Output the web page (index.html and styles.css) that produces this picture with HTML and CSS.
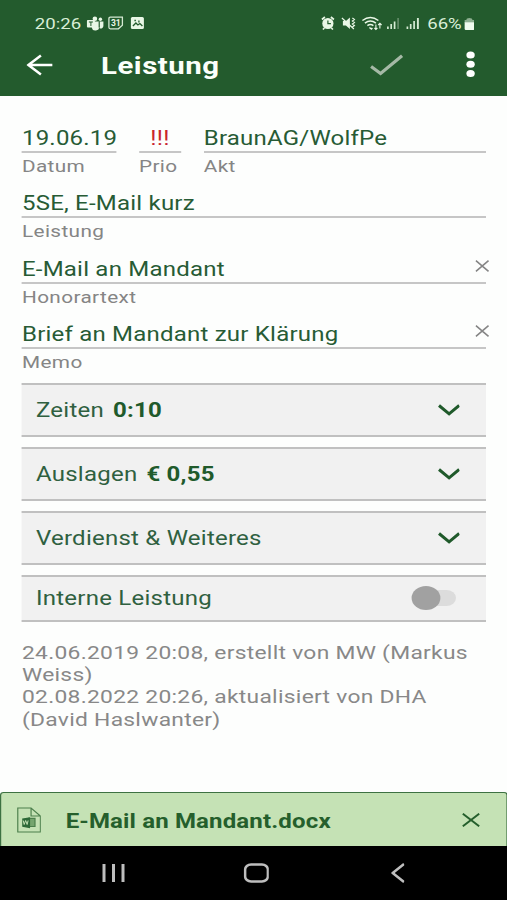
FILE: index.html
```
<!DOCTYPE html>
<html lang="de">
<head>
<meta charset="utf-8">
<title>Leistung</title>
<link rel="stylesheet" href="styles.css">
</head>
<body>
<div class="screen">
  <header class="top">
    <div class="status">
      <span class="clock">20:26</span>
      <svg class="status-left" viewBox="0 0 60 16" preserveAspectRatio="none" fill="none">
        <g fill="#e9f7e6">
          <circle cx="8.500" cy="3.700" r="2.300"/><circle cx="14" cy="4.300" r="1.700"/>
          <path d="M5 6.500h7.500v5.500a3.500 3 0 0 1-7 1zM13 6.500h4v4.500a2.500 2.500 0 0 1-4 2z"/>
          <rect x="0.500" y="5" width="8" height="7.500" rx="1"/>
        </g>
        <path d="M2.500 7h4M4.500 7v4M12.800 6.500v6" stroke="#235b2d" stroke-width="1"/>
        <path d="M24 2.200h12v8l-4 3.600h-8q-1.500 0-1.500-1.500v-8.600q0-1.500 1.500-1.500z" stroke="#d5e9d3" stroke-width="1.300"/>
        <text class="calendar-day" x="24.500" y="11">31</text>
        <rect x="44.500" y="2" width="13" height="12" rx="1.500" fill="#e9f7e6"/>
        <path d="M46.500 11l3-3 2 2 2-1.500 2.500 2.500M48 5.500h1.500M52.500 5.500v2" stroke="#235b2d" stroke-width="1.300"/>
      </svg>
      <svg class="status-right" viewBox="0 0 102 16" preserveAspectRatio="none" fill="none">
        <circle cx="7.500" cy="8.500" r="5.600" fill="#e9f7e6"/>
        <path d="M1.500 4.500l3-2.500M13.500 4.500l-3-2.500M4 13l-1.500 1.500M11 13l1.500 1.500" stroke="#e9f7e6" stroke-width="1.700"/>
        <path d="M7.500 5.500v3.200h3" stroke="#235b2d" stroke-width="1.200"/>
        <path d="M22.500 6h3l4-3.500v11.500l-4-3.500h-3z" fill="#e9f7e6"/>
        <path d="M21.500 3l12 11M32 3l2 1.500-2 1.500 2 1.500-2 1.500 2 1.500-2 1.500" stroke="#e9f7e6" stroke-width="1.200"/>
        <path d="M42 5.500q8-6 16 0M44.500 8.200q5.500-4.200 11 0M47 10.700q3-2.200 6 0" stroke="#e9f7e6" stroke-width="1.500"/>
        <path d="M49 12.500l2 1.500 1-1" stroke="#e9f7e6" stroke-width="1.500"/>
        <path d="M55.500 9.500v5M54 13l1.500 1.500 1.500-1.500M59.500 13.500v-5M57.800 10l1.700-1.700 1.700 1.700" stroke="#e9f7e6" stroke-width="1.100"/>
        <path d="M67.500 11.500v2.500M70.800 9v5M74.200 6.500v7.500M87 11.500v2.500M90.300 9v5M93.700 6v8" stroke="#d5ead3" stroke-width="1.700"/>
        <path d="M97.500 3v11" stroke="#d5ead3" stroke-width="1.900"/>
        <path d="M77.700 3v11" stroke="#648d69" stroke-width="1.700"/>
      </svg>
      <span class="percent">66%</span>
      <svg class="battery" viewBox="0 0 10 13" preserveAspectRatio="none">
        <path d="M2 2q0-2 3-2t3 2h2v3H0V2z" fill="#8eaf91"/><path d="M0 4.500h10V11q0 1.500-1.500 1.500h-7Q0 12.500 0 11z" fill="#f0faee"/>
      </svg>
    </div>
    <div class="toolbar">
      <svg class="back" viewBox="0 0 26 22" preserveAspectRatio="none" fill="none" stroke="#fff" stroke-width="2.500"><path d="M14.500 1.500L2 11l12.500 9.500M2 11h24"/></svg>
      <h1>Leistung</h1>
      <svg class="check" viewBox="0 0 34 22" preserveAspectRatio="none" fill="none" stroke="#a5b9a6" stroke-width="3.200"><path d="M1.500 12.500l9.500 7L32.500 1.800"/></svg>
      <svg class="more" viewBox="0 0 10 27" preserveAspectRatio="none" fill="#fff"><ellipse cx="5" cy="4" rx="4.200" ry="3.500"/><ellipse cx="5" cy="13.300" rx="4.200" ry="3.500"/><ellipse cx="5" cy="22.500" rx="4.200" ry="3.500"/></svg>
    </div>
  </header>

  <main>
    <section class="fields">
      <div class="field-row">
        <div class="field date"><div class="value">19.06.19</div><div class="label">Datum</div></div>
        <div class="field prio"><div class="value">!!!</div><div class="label">Prio</div></div>
        <div class="field file"><div class="value">BraunAG/WolfPe</div><div class="label">Akt</div></div>
      </div>
      <div class="field"><div class="value">5SE, E-Mail kurz</div><div class="label">Leistung</div></div>
      <div class="field"><div class="value">E-Mail an Mandant
        <svg class="clear" viewBox="0 0 14 12" preserveAspectRatio="none"><path d="M0.700 0.700l12.600 10.600M13.300 0.700L0.700 11.300"/></svg></div><div class="label">Honorartext</div></div>
      <div class="field"><div class="value">Brief an Mandant zur Klärung
        <svg class="clear" viewBox="0 0 14 12" preserveAspectRatio="none"><path d="M0.700 0.700l12.600 10.600M13.300 0.700L0.700 11.300"/></svg></div><div class="label">Memo</div></div>
    </section>

    <section class="panels">
      <div class="panel">Zeiten <b>0:10</b><svg class="chevron" viewBox="0 0 22 12" preserveAspectRatio="none"><path d="M1 1.500l10 8.300L21 1.500"/></svg></div>
      <div class="panel">Auslagen <b>€ 0,55</b><svg class="chevron" viewBox="0 0 22 12" preserveAspectRatio="none"><path d="M1 1.500l10 8.300L21 1.500"/></svg></div>
      <div class="panel">Verdienst &amp; Weiteres<svg class="chevron" viewBox="0 0 22 12" preserveAspectRatio="none"><path d="M1 1.500l10 8.300L21 1.500"/></svg></div>
      <div class="panel switch-panel">Interne Leistung<span class="switch"><span class="knob"></span></span></div>
    </section>

    <p class="history">24.06.2019 20:08, erstellt von MW (Markus<br>Weiss)<br>02.08.2022 20:26, aktualisiert von DHA<br>(David Haslwanter)</p>
  </main>

  <div class="attachment">
    <svg class="doc" viewBox="0 0 25 26" preserveAspectRatio="none" fill="none" stroke="#4c7f4c" stroke-width="1.200">
      <path d="M1 1h13.500l9.500 8v16H1zM14.500 1v8H24"/>
      <path d="M12 11.300h6.500v8.200H12z" fill="#76a56f"/>
      <path d="M5.500 11.500l8-1.300v11l-8-1.500z" fill="#2d6937" stroke="none"/>
      <path d="M6.500 13.500l1 4 1.500-4 1.500 4 1-4" stroke="#c5e2b5" stroke-width="1"/>
    </svg>
    <span class="filename">E-Mail an Mandant.docx</span>
    <svg class="remove" viewBox="0 0 18 14" preserveAspectRatio="none"><path d="M0.800 0.700l16.400 12.600M17.200 0.700L0.800 13.300"/></svg>
  </div>

  <nav class="system">
    <svg class="recents" viewBox="0 0 24 20" preserveAspectRatio="none"><path d="M2 1v18M11.500 1v18M21 1v18"/></svg>
    <svg class="home" viewBox="0 0 26 20" preserveAspectRatio="none"><rect x="1.500" y="1.500" width="23" height="17" rx="6" ry="5"/></svg>
    <svg class="nav-back" viewBox="0 0 14 20" preserveAspectRatio="none"><path d="M13 1L1.500 10 13 19"/></svg>
  </nav>
</div>
</body>
</html>
```
FILE: styles.css
```
* { box-sizing: border-box; }

body {
  margin: 0;
  background: #fff;
  overflow: hidden;
  font-family: Roboto, "Liberation Sans", sans-serif;
}

svg { display: block; flex: none; }

.screen {
  width: 422.5px;
  height: 900px;
  display: flex;
  flex-direction: column;
  transform: scaleX(1.2);
  transform-origin: 0 0;
  background: #fdfefd;
}

.top { height: 95.5px; background: #235b2d; flex: none; }

.status {
  display: flex;
  height: 36px;
  padding: 12px 0 0 29px;
  color: #d9eed7;
  font-size: 15.500px;
  line-height: 24px;
}
.clock { width: 43px; }
.status-left { width: 50px; height: 16px; margin-top: 3px; }
.calendar-day { font-size: 8.500px; font-weight: 700; fill: #e9f7e6; }
.status-right { width: 85px; height: 16px; margin: 3px 0 0 145px; }
.percent { margin-left: 4px; width: 30.500px; }
.battery { width: 8.300px; height: 12.500px; margin-top: 5.500px; }

.toolbar { display: flex; align-items: center; height: 58px; padding-left: 22.200px; }
.back { width: 21.700px; height: 22px; margin-top: -1px; }
h1 {
  margin: 2px 0 0 40.300px;
  width: 224px;
  color: #fbfffa;
  font-size: 24.500px;
  letter-spacing: 0.450px;
  line-height: 30px;
  font-weight: 700;
}
.check { width: 28.300px; height: 22px; margin-top: -1px; }
.more { width: 8.300px; height: 27px; margin: -1px 0 0 51.500px; }

main { flex: 1; padding: 24px 17.500px 0 18.300px; }

.fields { display: flex; flex-direction: column; gap: 5.670px; height: 263.500px; }
.field-row { display: flex; }
.date { width: 79.200px; margin-right: 18.300px; }
.prio { width: 35px; margin-right: 19px; }
.file { flex: 1; }
.value {
  display: flex;
  justify-content: space-between;
  height: 33px;
  padding-top: 5px;
  border-bottom: 2px solid #c6c6c6;
  color: #275b35;
  font-size: 20px;
  letter-spacing: 0.180px;
  line-height: 26px;
  white-space: nowrap;
}
.prio .value { justify-content: center; color: #c9252d; }
.label { height: 27px; color: #858585; font-size: 17.300px; letter-spacing: 0.320px; line-height: 27px; }
.clear {
  width: 11.700px;
  height: 12px;
  margin: 4px -2.800px 0 0;
  fill: none;
  stroke: #858585;
  stroke-width: 1.600;
}

.panels { display: flex; flex-direction: column; gap: 10px; }
.panel {
  display: flex;
  align-items: center;
  height: 54px;
  padding: 0 22px 0 11.700px;
  background: #f1f1f1;
  border-top: 2px solid #c0c0c0;
  border-bottom: 2px solid #c0c0c0;
  color: #2f6040;
  font-size: 20px;
  letter-spacing: 0.200px;
}
.panel b { margin-left: 7.500px; color: #205a2b; }
.chevron {
  width: 18.500px;
  height: 12px;
  margin-left: auto;
  fill: none;
  stroke: #205a2b;
  stroke-width: 3;
}
.switch-panel { height: 47px; padding-right: 24.700px; margin-top: -0.500px; }
.switch {
  display: flex;
  align-items: center;
  width: 37.500px;
  height: 16px;
  margin-left: auto;
  border-radius: 8px;
  background: linear-gradient(90deg, transparent 50%, #dcdcdc 50%);
}
.knob { width: 24px; height: 24px; border-radius: 50%; background: #a1a1a1; }

.history {
  margin: 20.500px 0 0;
  color: #888;
  font-size: 19px;
  letter-spacing: 0.240px;
  line-height: 22.200px;
  white-space: nowrap;
}

.attachment {
  display: flex;
  align-items: center;
  flex: none;
  height: 54.500px;
  padding: 1px 21.300px 0 12.800px;
  background: #c5e2b5;
  border: 1.500px solid #3d7142;
  border-bottom: 0;
  border-radius: 3px 3px 0 0;
}
.doc { width: 20.500px; height: 26px; }
.filename { margin: 2px 0 0 20.400px; color: #255f2c; font-size: 20px; font-weight: 700; letter-spacing: 0.130px; }
.remove { width: 15px; height: 14px; margin-left: auto; fill: none; stroke: #255f2c; stroke-width: 1.900; }

.system { display: flex; align-items: center; flex: none; height: 54px; padding-left: 85px; background: #000; fill: none; stroke: #bebebe; stroke-width: 2.600; }
.recents { width: 20px; height: 20px; stroke-width: 3; }
.home { width: 21.500px; height: 20px; margin-left: 97.500px; }
.nav-back { width: 11.500px; height: 20px; margin-left: 101.500px; }
```
